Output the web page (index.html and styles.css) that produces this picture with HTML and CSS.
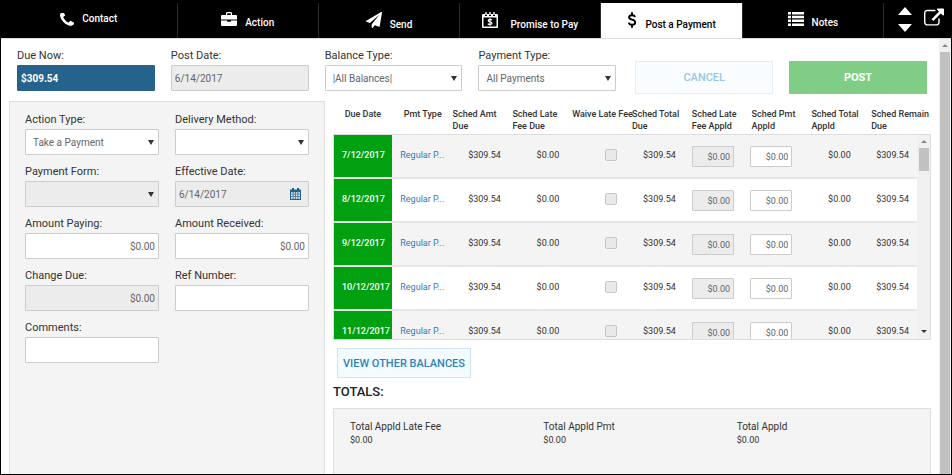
FILE: index.html
```html
<!DOCTYPE html>
<html lang="en">

<head>
    <meta charset="UTF-8">
    <meta name="viewport" content="width=device-width, initial-scale=1.0">
    <title>Post a Payment</title>
    <link rel="stylesheet" href="styles.css">
</head>

<body>
    <div class="window">
        <header class="header">
            <nav class="tabs">
                <a href="#" class="tab tab-first">
                    <svg class="icon-phone" viewBox="192 256 1408 1280"><path d="M1600 1240q0 27-10 70.500t-21 68.500q-21 50-122 106-94 51-186 51-27 0-52.500-3.500t-57.500-12.500-47.500-14.500-55.500-20.500-49-18q-98-35-175-83-128-79-264.500-215.500t-215.500-264.500q-48-77-83-175-3-9-18-49t-20.500-55.500-14.500-47.500-12.500-57.500-3.500-52.500q0-92 51-186 56-101 106-122 25-11 68.500-21t70.500-10q14 0 21 3 18 6 53 76 11 19 30 54t35 63.500 31 53.500q3 4 17.500 25t21.500 35.500 7 28.500q0 20-28.500 50t-62 55-62 53-28.500 46q0 9 5 22.500t8.500 20.500 14 24 11.500 19q76 137 174 235t235 174q2 1 19 11.500t24 14 20.500 8.500 22.500 5q18 0 46-28.500t53-62 55-62 50-28.500q14 0 28.500 7t35.500 21.500 25 17.500q25 15 53.500 31t63.500 35 54 30q70 35 76 53 3 7 3 21z"/></svg>
                    <span>Contact</span>
                </a>
                <a href="#" class="tab">
                    <svg class="icon" viewBox="0 0 16 14"><path d="M5 3V1.200Q5 0 6.200 0h3.600Q11 0 11 1.200V3h4q1 0 1 1v3.500H0V4q0-1 1-1zM6.200 3h3.600V1.300H6.200z" fill-rule="evenodd"/><path d="M0 8.400h6.200v1.300h3.600V8.400H16V13q0 1-1 1H1q-1 0-1-1z"/></svg>
                    <span>Action</span>
                </a>
                <a href="#" class="tab">
                    <svg class="icon icon-tall" viewBox="0 0 1792 1792"><path d="M1764 11q33 24 27 64l-256 1536q-5 29-32 45-14 8-31 8-11 0-24-5l-453-185-242 295q-18 23-49 23-13 0-22-4-19-7-30.500-23.500t-11.500-36.500v-349l864-1059-1069 925-395-162q-37-14-40-55-2-40 32-59l1664-960q15-9 32-9 20 0 36 11z"/></svg>
                    <span>Send</span>
                </a>
                <a href="#" class="tab tab-promise">
                    <svg class="icon icon-tall" viewBox="0 0 16 16"><path d="M1 2h2v2h2V2h2v2h2V2h2v2h2V2h2q1 0 1 1v12q0 1-1 1H1q-1 0-1-1V3q0-1 1-1zM1.500 5.500v9h13v-9z" fill-rule="evenodd"/><path d="M3.300 0h1.400v3H3.300zM7.300 0h1.400v3H7.300zM11.300 0h1.400v3h-1.400z"/><path d="M10 8.200Q9.500 7.400 8 7.400q-1.800 0-1.800 1.200T8 9.900q2 .2 2 1.400t-2 1.200q-1.600 0-2.100-.9M8 6.200v7.500" fill="none" stroke="currentColor" stroke-width="1.200"/></svg>
                    <span>Promise to Pay</span>
                </a>
                <a href="#" class="tab active">
                    <svg class="icon-dollar" viewBox="0 0 9 16"><path d="M7.600 5Q7 3.200 4.500 3.200 1.600 3.200 1.600 5.300q0 1.700 2.900 2.400 3.200.7 3.200 2.800 0 2.300-3.200 2.300-2.700 0-3.200-2.200M4.500.3v3M4.500 12.700v3" fill="none" stroke="currentColor" stroke-width="1.900"/></svg>
                    <span>Post a Payment</span>
                </a>
                <a href="#" class="tab">
                    <svg class="icon" viewBox="0 0 16 14"><path d="M0 0h3v2.500H0zM4 0h12v2.500H4zM0 3.800h3v2.500H0zM4 3.800h12v2.500H4zM0 7.600h3v2.500H0zM4 7.600h12v2.500H4zM0 11.400h3v2.500H0zM4 11.400h12v2.500H4z"/></svg>
                    <span>Notes</span>
                </a>
            </nav>
            <div class="tools">
                <div class="arrows">
                    <button type="button" class="tool" aria-label="Previous"><svg class="icon-arrow" viewBox="0 0 14 8"><path d="M7 0l7 8H0z"/></svg></button>
                    <button type="button" class="tool" aria-label="Next"><svg class="icon-arrow" viewBox="0 0 14 8"><path d="M0 0h14L7 8z"/></svg></button>
                </div>
                <button type="button" class="tool" aria-label="Open in new window"><svg class="icon-open" viewBox="64 64 1792 1536"><path d="M1472 992v320q0 119-84.500 203.500t-203.500 84.500h-832q-119 0-203.500-84.500t-84.500-203.500v-832q0-119 84.500-203.500t203.500-84.500h704q14 0 23 9t9 23v64q0 14-9 23t-23 9h-704q-66 0-113 47t-47 113v832q0 66 47 113t113 47h832q66 0 113-47t47-113v-320q0-14 9-23t23-9h64q14 0 23 9t9 23zm384-864v512q0 26-19 45t-45 19-45-19l-176-176-652 652q-10 10-23 10t-23-10l-114-114q-10-10-10-23t10-23l652-652-176-176q-19-19-19-45t19-45 45-19h512q26 0 45 19t19 45z"/></svg></button>
            </div>
        </header>

        <div class="main">
            <form class="content">
                <div class="toolbar">
                    <div class="field">
                        <label for="due-now">Due Now:</label>
                        <input type="text" id="due-now" class="due-now" value="$309.54" readonly>
                    </div>
                    <div class="field">
                        <label for="post-date">Post Date:</label>
                        <input type="text" id="post-date" value="6/14/2017" disabled>
                    </div>
                    <div class="field">
                        <label for="balance-type">Balance Type:</label>
                        <div class="select"><select id="balance-type"><option>|All Balances|</option></select></div>
                    </div>
                    <div class="field">
                        <label for="payment-type">Payment Type:</label>
                        <div class="select"><select id="payment-type"><option>All Payments</option></select></div>
                    </div>
                    <button type="button" class="btn btn-cancel">CANCEL</button>
                    <button type="button" class="btn btn-post">POST</button>
                </div>

                <div class="columns">
                    <div class="panel">
                        <div class="field">
                            <label for="action-type">Action Type:</label>
                            <div class="select"><select id="action-type"><option>Take a Payment</option></select></div>
                        </div>
                        <div class="field">
                            <label for="delivery-method">Delivery Method:</label>
                            <div class="select"><select id="delivery-method"><option></option></select></div>
                        </div>
                        <div class="field">
                            <label for="payment-form">Payment Form:</label>
                            <div class="select"><select id="payment-form" disabled><option></option></select></div>
                        </div>
                        <div class="field">
                            <label for="effective-date">Effective Date:</label>
                            <div class="date">
                                <input type="text" id="effective-date" value="6/14/2017" disabled>
                                <svg class="icon-calendar" viewBox="0 0 11 12"><path d="M0 1.500h11V12H0z"/><path d="M2 0h2v3H2zM7 0h2v3H7z"/><path d="M1 4.200h1.800v1.600H1zM3.500 4.200h1.700v1.600H3.500zM5.900 4.200h1.700v1.600H5.900zM8.300 4.200H10v1.600H8.300zM1 6.600h1.800v1.700H1zM3.500 6.600h1.700v1.700H3.500zM5.900 6.600h1.700v1.700H5.900zM8.300 6.600H10v1.700H8.300zM1 9.100h1.800v1.700H1zM3.500 9.100h1.700v1.700H3.500zM5.900 9.100h1.700v1.700H5.900zM8.300 9.100H10v1.700H8.300z" fill="#ececec"/></svg>
                            </div>
                        </div>
                        <div class="field">
                            <label for="amount-paying">Amount Paying:</label>
                            <input type="text" id="amount-paying" class="amount" value="$0.00">
                        </div>
                        <div class="field">
                            <label for="amount-received">Amount Received:</label>
                            <input type="text" id="amount-received" class="amount" value="$0.00">
                        </div>
                        <div class="field">
                            <label for="change-due">Change Due:</label>
                            <input type="text" id="change-due" class="amount" value="$0.00" disabled>
                        </div>
                        <div class="field">
                            <label for="ref-number">Ref Number:</label>
                            <input type="text" id="ref-number">
                        </div>
                        <div class="field">
                            <label for="comments">Comments:</label>
                            <input type="text" id="comments">
                        </div>
                    </div>

                    <div class="schedule">
                        <div class="table-container">
                            <table>
                                <thead>
                                    <tr>
                                        <th class="center">Due Date</th>
                                        <th class="center">Pmt Type</th>
                                        <th>Sched Amt<br>Due</th>
                                        <th>Sched Late<br>Fee Due</th>
                                        <th>Waive Late Fee</th>
                                        <th>Sched Total<br>Due</th>
                                        <th>Sched Late<br>Fee Appld</th>
                                        <th>Sched Pmt<br>Appld</th>
                                        <th>Sched Total<br>Appld</th>
                                        <th>Sched Remain<br>Due</th>
                                    </tr>
                                </thead>
                                <tbody>
                                    <tr>
                                        <td class="due">7/12/2017</td>
                                        <td class="type"><a href="#">Regular P...</a></td>
                                        <td>$309.54</td>
                                        <td>$0.00</td>
                                        <td><input type="checkbox" aria-label="Waive late fee 7/12/2017" disabled></td>
                                        <td>$309.54</td>
                                        <td><input type="text" class="amount" aria-label="Late fee applied 7/12/2017" value="$0.00" disabled></td>
                                        <td><input type="text" class="amount" aria-label="Payment applied 7/12/2017" value="$0.00"></td>
                                        <td>$0.00</td>
                                        <td>$309.54</td>
                                    </tr>
                                    <tr>
                                        <td class="due">8/12/2017</td>
                                        <td class="type"><a href="#">Regular P...</a></td>
                                        <td>$309.54</td>
                                        <td>$0.00</td>
                                        <td><input type="checkbox" aria-label="Waive late fee 8/12/2017" disabled></td>
                                        <td>$309.54</td>
                                        <td><input type="text" class="amount" aria-label="Late fee applied 8/12/2017" value="$0.00" disabled></td>
                                        <td><input type="text" class="amount" aria-label="Payment applied 8/12/2017" value="$0.00"></td>
                                        <td>$0.00</td>
                                        <td>$309.54</td>
                                    </tr>
                                    <tr>
                                        <td class="due">9/12/2017</td>
                                        <td class="type"><a href="#">Regular P...</a></td>
                                        <td>$309.54</td>
                                        <td>$0.00</td>
                                        <td><input type="checkbox" aria-label="Waive late fee 9/12/2017" disabled></td>
                                        <td>$309.54</td>
                                        <td><input type="text" class="amount" aria-label="Late fee applied 9/12/2017" value="$0.00" disabled></td>
                                        <td><input type="text" class="amount" aria-label="Payment applied 9/12/2017" value="$0.00"></td>
                                        <td>$0.00</td>
                                        <td>$309.54</td>
                                    </tr>
                                    <tr>
                                        <td class="due">10/12/2017</td>
                                        <td class="type"><a href="#">Regular P...</a></td>
                                        <td>$309.54</td>
                                        <td>$0.00</td>
                                        <td><input type="checkbox" aria-label="Waive late fee 10/12/2017" disabled></td>
                                        <td>$309.54</td>
                                        <td><input type="text" class="amount" aria-label="Late fee applied 10/12/2017" value="$0.00" disabled></td>
                                        <td><input type="text" class="amount" aria-label="Payment applied 10/12/2017" value="$0.00"></td>
                                        <td>$0.00</td>
                                        <td>$309.54</td>
                                    </tr>
                                    <tr>
                                        <td class="due">11/12/2017</td>
                                        <td class="type"><a href="#">Regular P...</a></td>
                                        <td>$309.54</td>
                                        <td>$0.00</td>
                                        <td><input type="checkbox" aria-label="Waive late fee 11/12/2017" disabled></td>
                                        <td>$309.54</td>
                                        <td><input type="text" class="amount" aria-label="Late fee applied 11/12/2017" value="$0.00" disabled></td>
                                        <td><input type="text" class="amount" aria-label="Payment applied 11/12/2017" value="$0.00"></td>
                                        <td>$0.00</td>
                                        <td>$309.54</td>
                                    </tr>
                                </tbody>
                            </table>
                            <div class="table-scroll">
                                <span class="scroll-up"></span>
                                <span class="table-thumb"></span>
                                <span class="scroll-down"></span>
                            </div>
                        </div>

                        <button type="button" class="btn btn-view">VIEW OTHER BALANCES</button>

                        <h2>TOTALS:</h2>
                        <dl class="totals">
                            <div><dt>Total Appld Late Fee</dt><dd>$0.00</dd></div>
                            <div><dt>Total Appld Pmt</dt><dd>$0.00</dd></div>
                            <div><dt>Total Appld</dt><dd>$0.00</dd></div>
                        </dl>
                    </div>
                </div>
            </form>
            <div class="page-scroll">
                <span class="scroll-up"></span>
                <span class="page-thumb"></span>
            </div>
        </div>
    </div>
</body>

</html>
```
FILE: styles.css
```css
* {
    box-sizing: border-box;
}

body {
    margin: 0;
    font-family: Roboto, Arial, sans-serif;
    font-size: 11px;
    color: #333;
}

.window {
    height: 100vh;
    display: flex;
    flex-direction: column;
    overflow: hidden;
    border: 1px solid #000;
    border-top: 0;
}

/* header */
.header {
    flex: none;
    height: 38px;
    padding-top: 3px;
    display: flex;
    background: #000;
}

.tabs {
    flex: 1;
    display: flex;
}

.tab {
    flex: 1;
    display: flex;
    justify-content: center;
    align-items: baseline;
    gap: 8px;
    padding-top: 9px;
    border-right: 1px solid #2b2b2b;
    color: #fff;
    font-size: 10px;
    font-weight: 500;
    line-height: 16px;
    text-decoration: none;
}

.tab-first {
    flex: none;
    width: 20%;
    padding: 0 0 3px;
    align-items: center;
}

.tab-promise {
    gap: 12px;
}

.tab.active {
    background: #fff;
    color: #000;
}

svg {
    display: block;
    flex: none;
    fill: currentColor;
}

.icon {
    width: 16px;
    height: 14px;
}

.icon-tall {
    height: 16px;
}

.icon-phone {
    width: 14px;
    height: 13px;
}

.icon-dollar {
    width: 10px;
    height: 16px;
}

.tools {
    width: 67px;
    display: flex;
    gap: 12px;
    padding: 4px 0 0 14px;
}

.arrows {
    display: flex;
    flex-direction: column;
    gap: 9px;
}

.tool {
    padding: 0;
    border: 0;
    background: none;
    color: #fff;
    align-self: flex-start;
}

.icon-arrow {
    width: 14px;
    height: 8px;
}

.icon-open {
    width: 20px;
    height: 20px;
}

/* main */
.main {
    flex: 1;
    min-height: 0;
    display: flex;
    border-top: 1px solid #ddd;
}

.content {
    flex: 1;
    min-width: 0;
    display: flex;
    flex-direction: column;
    padding: 10px 8px 0;
}

.toolbar {
    display: flex;
    gap: 16px;
    padding: 0 4px 0 8px;
}

.toolbar .field,
.toolbar .btn {
    flex: 1 1 10px;
}

.field label {
    display: block;
    height: 16px;
    line-height: 14px;
}

input[type="text"],
select {
    display: block;
    width: 100%;
    height: 26px;
    margin: 0;
    padding: 0 3px;
    border: 1px solid #ccc;
    border-radius: 1px;
    background: #fff;
    color: #666;
    font-family: inherit;
    font-size: 10px;
    opacity: 1;
}

select {
    padding: 0 7px;
    appearance: none;
}

input:disabled,
select:disabled {
    background: #ececec;
}

input.due-now {
    border-color: #25638c;
    background: #25638c;
    color: #fff;
    font-weight: 700;
}

input.amount {
    text-align: right;
}

.select,
.date {
    position: relative;
}

.select::after {
    content: "";
    position: absolute;
    right: 5px;
    top: 11px;
    border: 3px solid transparent;
    border-top: 5px solid #333;
    border-bottom: 0;
    pointer-events: none;
}

.icon-calendar {
    position: absolute;
    right: 8px;
    top: 7px;
    width: 11px;
    height: 12px;
    color: #25638c;
}

.btn {
    height: 33px;
    margin-top: 12px;
    padding: 0;
    border: 1px solid #cfe6f2;
    background: #f3fbff;
    color: #2e83b8;
    font-family: inherit;
    font-size: 11px;
    font-weight: 500;
}

.btn-cancel {
    margin-left: 3px;
    border-color: #e1f0f7;
    background: #f9fdff;
    color: #97c8e0;
}

.btn-post {
    border-color: #80ce85;
    background: #80ce85;
    color: #fff;
    font-weight: 700;
}

.columns {
    flex: 1;
    min-height: 0;
    display: grid;
    grid-template-columns: 316fr 598fr;
    gap: 8px;
    margin-top: 7px;
}

.panel {
    display: grid;
    grid-template-columns: 1fr 1fr;
    align-content: start;
    gap: 10px 16px;
    padding: 11px 15px 0;
    border: 1px solid #ddd;
    border-bottom: 0;
    background: #f4f4f4;
}

/* schedule */
.schedule {
    min-width: 0;
    min-height: 0;
    display: flex;
    flex-direction: column;
    align-items: flex-start;
}

.table-container {
    position: relative;
    width: 100%;
}

table,
tbody {
    display: block;
}

table {
    font-size: 9px;
}

thead {
    display: block;
    padding-top: 7px;
}

tr {
    display: grid;
    grid-template-columns: repeat(10, minmax(0, 1fr));
}

thead tr {
    height: 26px;
}

th {
    padding: 0;
    font-weight: 500;
    line-height: 12px;
    text-align: left;
    white-space: nowrap;
}

th.center {
    text-align: center;
}

tbody {
    height: 206px;
    padding-right: 13px;
    overflow: hidden;
    border: 1px solid #ddd;
}

tbody tr {
    height: 44px;
    border-bottom: 2px solid #e6e6e6;
}

tbody tr:nth-child(odd) {
    background: #f4f4f4;
}

td {
    display: flex;
    justify-content: flex-end;
    padding: 14px 8px 0;
    line-height: 12px;
    white-space: nowrap;
}

td.due {
    padding-right: 0;
    justify-content: flex-start;
    background: #00a010;
    color: #fff;
    font-weight: 500;
}

td.type {
    padding-right: 0;
    justify-content: flex-start;
}

td a {
    color: #337ab7;
    text-decoration: none;
}

td input[type="text"] {
    height: 21px;
    font-size: 9px;
    margin-top: -3px;
}

input[type="checkbox"] {
    appearance: none;
    width: 12px;
    height: 12px;
    margin: 0;
    border: 1px solid #c6c6c6;
    border-radius: 2px;
    background: #e9e9e9;
}

/* scrollbars */
.table-scroll {
    position: absolute;
    right: 1px;
    bottom: 1px;
    width: 13px;
    height: 204px;
    display: flex;
    flex-direction: column;
    align-items: center;
    padding: 5px 0 6px;
    background: #f0f0f0;
}

.scroll-up,
.scroll-down {
    border: 3px solid transparent;
}

.scroll-up {
    border-top: 0;
    border-bottom-color: #888;
}

.scroll-down {
    margin-top: auto;
    border-bottom: 0;
    border-top-color: #333;
}

.table-thumb {
    width: 10px;
    height: 23px;
    margin-top: 5px;
    background: #c1c1c1;
}

.page-scroll {
    width: 12px;
    display: flex;
    flex-direction: column;
    align-items: center;
    padding-top: 5px;
    background: #f0f0f0;
}

.page-thumb {
    flex: 1;
    width: 10px;
    margin-top: 5px;
    background: #c1c1c1;
}

.btn-view {
    flex: none;
    height: 30px;
    margin: 8px 0 0 4px;
    padding: 0 5px;
}

h2 {
    margin: 6px 0 8px;
    font-size: 13px;
    font-weight: 500;
    line-height: 16px;
    color: #222;
}

.totals {
    flex: 1;
    width: 100%;
    margin: 0;
    padding: 11px 0 0 16px;
    display: grid;
    grid-template-columns: repeat(3, 1fr);
    border: 1px solid #ddd;
    border-bottom: 0;
    background: #f4f4f4;
}

.totals dt {
    font-size: 10px;
    line-height: 14px;
}

.totals dd {
    margin: 0;
    font-size: 9px;
    line-height: 12px;
}
```
